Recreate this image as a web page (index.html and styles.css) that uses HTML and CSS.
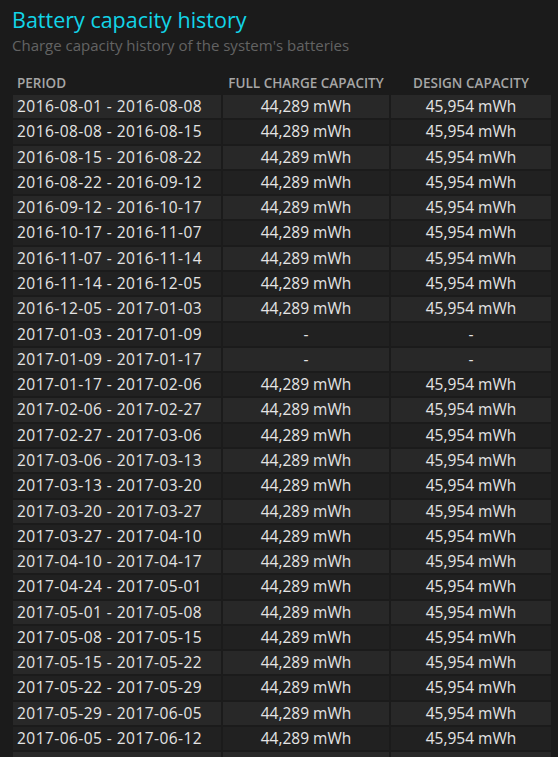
FILE: index.html
```html
<!DOCTYPE html>
<html>
<head>
  <title>Battery report</title>
  <link rel="stylesheet" href="styles.css">
</head>
<body>
  <div class="section">
    <h1>Battery capacity history</h1>
    <div class="subtitle">Charge capacity history of the system's batteries</div>

    <table class="history">
      <colgroup>
        <col class="col-period">
        <col class="col-full">
        <col class="col-design">
      </colgroup>
      <thead>
        <tr>
          <th class="left">PERIOD</th>
          <th>FULL CHARGE CAPACITY</th>
          <th>DESIGN CAPACITY</th>
        </tr>
      </thead>
      <tbody>
        <tr><td class="left">2016-08-01 - 2016-08-08</td><td>44,289 mWh</td><td>45,954 mWh</td></tr>
        <tr><td class="left">2016-08-08 - 2016-08-15</td><td>44,289 mWh</td><td>45,954 mWh</td></tr>
        <tr><td class="left">2016-08-15 - 2016-08-22</td><td>44,289 mWh</td><td>45,954 mWh</td></tr>
        <tr><td class="left">2016-08-22 - 2016-09-12</td><td>44,289 mWh</td><td>45,954 mWh</td></tr>
        <tr><td class="left">2016-09-12 - 2016-10-17</td><td>44,289 mWh</td><td>45,954 mWh</td></tr>
        <tr><td class="left">2016-10-17 - 2016-11-07</td><td>44,289 mWh</td><td>45,954 mWh</td></tr>
        <tr><td class="left">2016-11-07 - 2016-11-14</td><td>44,289 mWh</td><td>45,954 mWh</td></tr>
        <tr><td class="left">2016-11-14 - 2016-12-05</td><td>44,289 mWh</td><td>45,954 mWh</td></tr>
        <tr><td class="left">2016-12-05 - 2017-01-03</td><td>44,289 mWh</td><td>45,954 mWh</td></tr>
        <tr><td class="left">2017-01-03 - 2017-01-09</td><td>-</td><td>-</td></tr>
        <tr><td class="left">2017-01-09 - 2017-01-17</td><td>-</td><td>-</td></tr>
        <tr><td class="left">2017-01-17 - 2017-02-06</td><td>44,289 mWh</td><td>45,954 mWh</td></tr>
        <tr><td class="left">2017-02-06 - 2017-02-27</td><td>44,289 mWh</td><td>45,954 mWh</td></tr>
        <tr><td class="left">2017-02-27 - 2017-03-06</td><td>44,289 mWh</td><td>45,954 mWh</td></tr>
        <tr><td class="left">2017-03-06 - 2017-03-13</td><td>44,289 mWh</td><td>45,954 mWh</td></tr>
        <tr><td class="left">2017-03-13 - 2017-03-20</td><td>44,289 mWh</td><td>45,954 mWh</td></tr>
        <tr><td class="left">2017-03-20 - 2017-03-27</td><td>44,289 mWh</td><td>45,954 mWh</td></tr>
        <tr><td class="left">2017-03-27 - 2017-04-10</td><td>44,289 mWh</td><td>45,954 mWh</td></tr>
        <tr><td class="left">2017-04-10 - 2017-04-17</td><td>44,289 mWh</td><td>45,954 mWh</td></tr>
        <tr><td class="left">2017-04-24 - 2017-05-01</td><td>44,289 mWh</td><td>45,954 mWh</td></tr>
        <tr><td class="left">2017-05-01 - 2017-05-08</td><td>44,289 mWh</td><td>45,954 mWh</td></tr>
        <tr><td class="left">2017-05-08 - 2017-05-15</td><td>44,289 mWh</td><td>45,954 mWh</td></tr>
        <tr><td class="left">2017-05-15 - 2017-05-22</td><td>44,289 mWh</td><td>45,954 mWh</td></tr>
        <tr><td class="left">2017-05-22 - 2017-05-29</td><td>44,289 mWh</td><td>45,954 mWh</td></tr>
        <tr><td class="left">2017-05-29 - 2017-06-05</td><td>44,289 mWh</td><td>45,954 mWh</td></tr>
        <tr><td class="left">2017-06-05 - 2017-06-12</td><td>44,289 mWh</td><td>45,954 mWh</td></tr>
        <tr class="partial"><td class="left"></td><td></td><td></td></tr>
      </tbody>
    </table>
  </div>
</body>
</html>
```

FILE: styles.css
```css
html {
  overflow: hidden;
}

body {
  margin: 0;
  font-family: "Open Sans", "Noto Sans", sans-serif;
  background-color: #1b1b1b;
  color: #e4e4e4;
}

.section {
  padding: 5px 0 0 11px;
}

h1 {
  margin: 0 0 0 1px;
  font-size: 21.5px;
  font-weight: normal;
  line-height: 29px;
  color: #12d5e8;
}

.subtitle {
  margin-left: 1px;
  font-size: 15px;
  line-height: 22px;
  color: #636363;
}

.history {
  margin-top: 15px;
  table-layout: fixed;
  width: 542px;
  border-collapse: separate;
  border-spacing: 2px;
}

.col-period {
  width: 208px;
}

.col-full {
  width: 166px;
}

.col-design {
  width: 160px;
}

.history th {
  font-size: 13.5px;
  font-weight: 600;
  color: #a6a6a6;
  line-height: 20px;
  padding: 0;
  text-align: center;
  white-space: nowrap;
}

.history td {
  font-size: 15.5px;
  line-height: 21.28px;
  padding: 1px 0;
  text-align: center;
  white-space: nowrap;
}

.history .left {
  text-align: left;
  padding-left: 4px;
}

.history td.left {
  letter-spacing: 0.45px;
}

.history tbody tr:nth-child(odd) td {
  background-color: #282828;
}

.history tbody tr:nth-child(even) td {
  background-color: #212121;
}

.history .partial td {
  height: 21.28px;
}
```
